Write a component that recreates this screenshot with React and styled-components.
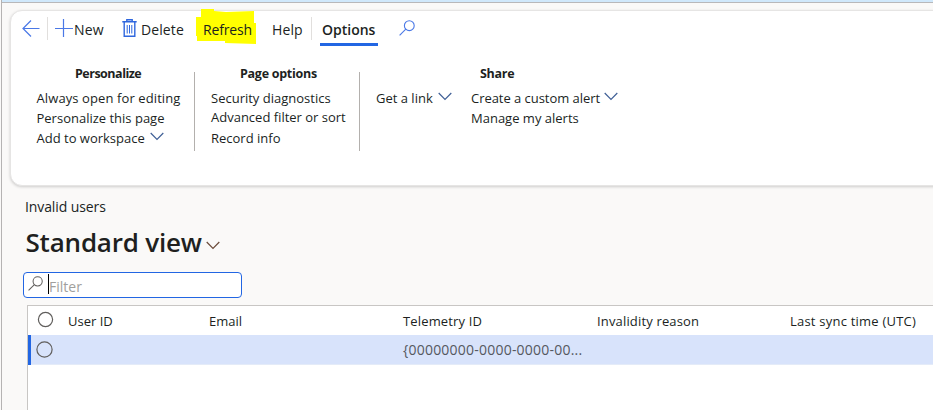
import React from 'react';
import styled, { createGlobalStyle } from 'styled-components';

const GlobalStyle = createGlobalStyle`
  * { box-sizing: border-box; }
  body {
    margin: 0;
    overflow: hidden;
    background: #faf9f8;
    color: #201f1e;
    font-family: "Open Sans", "Noto Sans", sans-serif;
    font-size: 13px;
  }
`;

const Page = styled.div`
  height: 410px;
  overflow: hidden;
  display: flex;
  flex-direction: column;
  margin-left: 1px;
  background: #faf9f8;
  border-left: 1px solid #b5b3b3;
`;

const WindowEdge = styled.div`
  flex: none;
  height: 3px;
  background: #d0e8fb;
  border-bottom: 1px solid #b8b8ba;
`;

const ActionPane = styled.section`
  flex: none;
  height: 176px;
  margin: 7px -20px 0 8px;
  background: #fff;
  border: 1px solid #e6e5e4;
  border-radius: 12px;
  box-shadow: 0 1px 3px rgba(0, 0, 0, 0.18);
`;

const Toolbar = styled.nav`
  display: flex;
  align-items: flex-start;
  height: 52px;
  padding: 6px 0 0 11px;
`;

const ToolLabel = styled.span`
  width: ${(p) => p.$width}px;
  margin-left: ${(p) => p.$gap}px;
  flex: none;
  white-space: nowrap;
  font-size: 14px;
  line-height: 26px;
  letter-spacing: ${(p) => p.$track || 0}px;
`;

const Highlight = styled.span`
  width: 60px;
  height: 35px;
  margin: -8px 0 0 12px;
  padding: 8px 0 0 7px;
  background: #ffff00;
  clip-path: polygon(5px 0, 18px 0, 18px 2px, 30px 3px, 58px 2px, 58px 14px, 60px 14px, 60px 35px, 29px 34px, 29px 32px, 1px 32px, 1px 27px, 0 27px, 0 8px, 5px 8px);
`;

const ActiveTab = styled.span`
  width: 58px;
  height: 29px;
  margin-left: 8px;
  padding-left: 2px;
  border-bottom: 3px solid #2266e3;
`;

const ToolLabelStrong = styled(ToolLabel)`
  font-weight: 600;
`;

const Separator = styled.span`
  width: 1px;
  height: 23px;
  margin-left: ${(p) => p.$gap}px;
  background: #e1dfdd;
`;

const Icon = styled.svg`
  flex: none;
  display: block;
  fill: none;
  stroke: ${(p) => p.$color || '#4a78e6'};
  stroke-width: ${(p) => p.$weight || 1.2};
  margin: ${(p) => p.$margin || '0'};
`;

const Groups = styled.div`
  display: flex;
`;

const Group = styled.div`
  width: ${(p) => p.$width}px;
  padding-left: ${(p) => p.$inset}px;
`;

const GroupTitle = styled.h2`
  margin: 0 0 5px;
  padding-left: ${(p) => p.$inset}px;
  font-size: 12.5px;
  font-weight: 700;
  line-height: 21px;
  height: 20px;
  letter-spacing: ${(p) => p.$track || 0}px;
  white-space: nowrap;
`;

const GroupDivider = styled.span`
  width: 1px;
  height: 79px;
  margin-top: 9px;
  background: #b3b0ad;
`;

const Action = styled.div`
  display: flex;
  height: ${(p) => p.$height || 20}px;
  line-height: 20px;
  white-space: nowrap;
  letter-spacing: ${(p) => p.$track || 0}px;
`;

const ShareColumns = styled.div`
  display: grid;
  grid-template-columns: 95px auto;
`;

const Content = styled.main`
  flex: 1;
  display: flex;
  flex-direction: column;
  padding: 10px 0 0 21px;
`;

const Caption = styled.div`
  padding-left: 2px;
  font-size: 14px;
  line-height: 22px;
  letter-spacing: -0.1px;
`;

const ViewTitle = styled.h1`
  display: flex;
  margin: 4px 0 0;
  padding-left: 2.5px;
  height: 40px;
  font-size: 26px;
  font-weight: 600;
  line-height: 40px;
  white-space: nowrap;
  letter-spacing: -0.2px;
`;

const FilterBox = styled.div`
  flex: none;
  display: flex;
  width: 219px;
  height: 26px;
  margin-top: 10px;
  background: #fff;
  border: 1px solid #2266e3;
  border-radius: 4px;
`;

const FilterHint = styled.span`
  height: 20px;
  margin: 1px 0 0 5px;
  border-left: 1px solid #000;
  color: #a19f9d;
  font-size: 14px;
  line-height: 25px;
`;

const Grid = styled.div`
  flex: 1;
  margin: 7px 0 0 4px;
  background: #fff;
  border: solid #c8c6c4;
  border-width: 1px 0 0 1px;
`;

const GridRow = styled.div`
  display: grid;
  grid-template-columns: 40px 141px 194px 194px 193px 1fr;
  white-space: nowrap;
`;

const HeaderRow = styled(GridRow)`
  height: 29px;
  line-height: 30px;
  font-weight: 500;
`;

const SelectedRow = styled(GridRow)`
  height: 30px;
  line-height: 30px;
  background: #d8e3fb;
  box-shadow: inset 3px 0 0 #2266e3, inset 0 -1px 0 #e4ebf8;
`;

const Cell = styled.span`
  letter-spacing: ${(p) => p.$track || 0}px;
`;

const GuidCell = styled(Cell)`
  color: #55585f;
  font-size: 14px;
`;

const Chevron = ({ color = '#3f5f96', margin = '4px 0 0 5px' }) => (
  <Icon width="14" height="9" viewBox="0 0 14 9" $color={color} $margin={margin}>
    <path d="M.7 1 7 7.3 13.3 1" />
  </Icon>
);

const Search = ({ size, color, margin }) => (
  <Icon width={size} height={size} viewBox="0 0 16 16" $color={color} $margin={margin} $weight="1.1">
    <circle cx="10.3" cy="5.7" r="4.9" />
    <path d="M6.8 9.2.6 15.4" />
  </Icon>
);

const Radio = ({ r, margin }) => (
  <Icon width="17" height="17" viewBox="0 0 17 17" $color="#605e5c" $margin={margin}>
    <circle cx="8.5" cy="8.5" r={r} />
  </Icon>
);

export default function App() {
  return (
    <>
      <GlobalStyle />
      <Page>
        <WindowEdge />
        <ActionPane>
          <Toolbar>
            <Icon width="18" height="18" viewBox="0 0 18 18" $margin="2px 0 0">
              <path d="M17.5 9.5H.9M9 1.5 1 9.5l8 8" />
            </Icon>
            <Separator $gap={7} />
            <Icon width="18" height="18" viewBox="0 0 18 18" $margin="2px 0 0 7px">
              <path d="M0 9.5h18M8.5 0v18" />
            </Icon>
            <ToolLabel $gap={1} $width={30} $track={0.15}>New</ToolLabel>
            <Icon width="15" height="19" viewBox="0 0 15 19" $margin="2px 0 0 18px" $weight="1.4" $color="#2f67de">
              <path d="M.3 2.8h14.4M4.8 2.5V.8h5.4v1.7M2.2 3v14.2h10.6V3" />
              <path d="M5.2 6v8.5M7.5 6v8.5M9.8 6v8.5" strokeWidth="1" />
            </Icon>
            <ToolLabel $gap={4} $width={43} $track={0.1}>Delete</ToolLabel>
            <Highlight>
              <ToolLabel $gap={0} $width={49} $track={-0.15}>Refresh</ToolLabel>
            </Highlight>
            <ToolLabel $gap={16} $width={31} $track={0.1}>Help</ToolLabel>
            <Separator $gap={8} />
            <ActiveTab>
              <ToolLabelStrong $gap={0} $width={54} $track={0}>Options</ToolLabelStrong>
            </ActiveTab>
            <Search size={16} margin="3px 0 0 21px" />
          </Toolbar>
          <Groups>
            <Group $width={183} $inset={25.5}>
              <GroupTitle $inset={38.5} $track={-0.5}>Personalize</GroupTitle>
              <Action $track={0.1}>Always open for editing</Action>
              <Action>Personalize this page</Action>
              <Action>Add to workspace<Chevron /></Action>
            </Group>
            <GroupDivider />
            <Group $width={164} $inset={16}>
              <GroupTitle $inset={29} $track={-0.27}>Page options</GroupTitle>
              <Action $height={19}>Security diagnostics</Action>
              <Action $height={21}>Advanced filter or sort</Action>
              <Action>Record info</Action>
            </Group>
            <GroupDivider />
            <Group $width={270} $inset={16}>
              <GroupTitle $inset={104} $track={-0.3}>Share</GroupTitle>
              <ShareColumns>
                <Action>Get a link<Chevron /></Action>
                <div>
                  <Action $track={-0.04}>Create a custom alert<Chevron margin="4px 0 0 4px" /></Action>
                  <Action>Manage my alerts</Action>
                </div>
              </ShareColumns>
            </Group>
          </Groups>
        </ActionPane>
        <Content>
          <Caption>Invalid users</Caption>
          <ViewTitle>
            Standard view
            <Chevron color="#6b4a3a" margin="19px 0 0 4px" />
          </ViewTitle>
          <FilterBox>
            <Search size={15} color="#605e5c" margin="3px 0 0 4px" />
            <FilterHint>Filter</FilterHint>
          </FilterBox>
          <Grid>
            <HeaderRow>
              <Radio r="7.1" margin="5px 0 0 9px" />
              <Cell>User ID</Cell>
              <Cell>Email</Cell>
              <Cell $track={0.15}>Telemetry ID</Cell>
              <Cell $track={0.16}>Invalidity reason</Cell>
              <Cell $track={0.22}>Last sync time (UTC)</Cell>
            </HeaderRow>
            <SelectedRow>
              <Radio r="7.6" margin="6px 0 0 8px" />
              <Cell />
              <Cell />
              <GuidCell $track={0.22}>{'{00000000-0000-0000-00...'}</GuidCell>
            </SelectedRow>
          </Grid>
        </Content>
      </Page>
    </>
  );
}
